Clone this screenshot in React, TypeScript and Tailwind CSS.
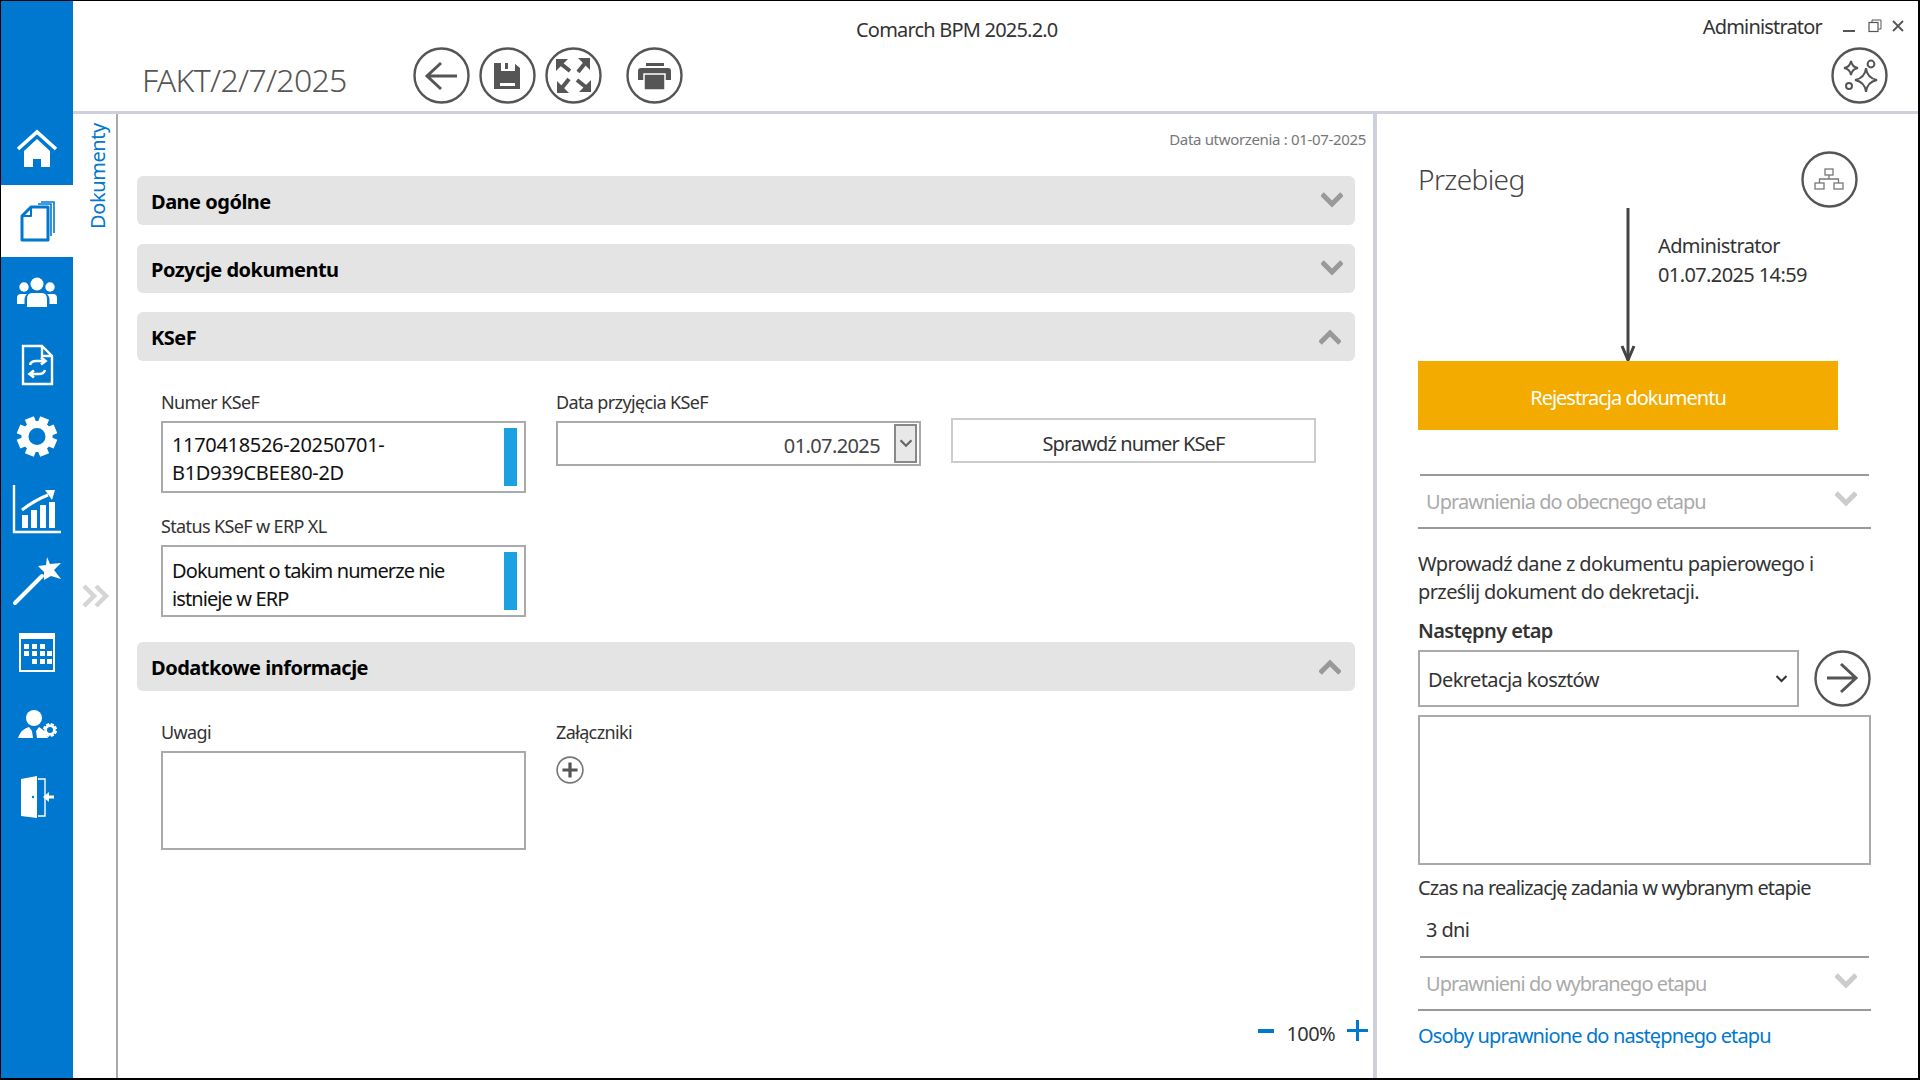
import React from "react";

const Chevron = ({ up = false, color = "#999999", w = 22, h = 16, sw = 5 }: { up?: boolean; color?: string; w?: number; h?: number; sw?: number }) => (
  <svg width={w} height={h} viewBox="0 0 22 16" className="block shrink-0">
    <polyline points={up ? "1,14 11,4 21,14" : "1,2 11,12 21,2"} fill="none" stroke={color} strokeWidth={sw} />
  </svg>
);

const Circle = ({ children, size = 57 }: { children?: React.ReactNode; size?: number }) => (
  <svg width={size} height={size} viewBox="0 0 57 57" className="block shrink-0">
    <circle cx="28.5" cy="28.5" r="27" fill="#fff" stroke="#555555" strokeWidth="2.4" />
    {children}
  </svg>
);

const Bar = ({ title, up = false, cls = "" }: { title: string; up?: boolean; cls?: string }) => (
  <div className={`h-[49px] rounded-[6px] bg-[#e4e4e4] flex items-center justify-between pl-[14px] pr-[13px] mr-[11px] ${cls}`}>
    <span className="text-[20px] font-bold text-black tracking-[-0.025em] pt-[3px]">{title}</span>
    <span className={up ? "mr-[1px] mt-[1px]" : "-mr-[1px] -mt-[2px]"}><Chevron up={up} /></span>
  </div>
);

const Label = ({ children }: { children: React.ReactNode }) => (
  <div className="h-[24px] leading-[22px] text-[18px] tracking-[-0.035em] text-[#333333]">{children}</div>
);

const TextField = ({ l1, l2, num = false }: { l1: string; l2: string; num?: boolean }) => (
  <div className="mt-[6px] w-[365px] h-[72px] border-2 border-[#aaaaaa] flex items-center justify-between pl-[9px] pr-[7px]">
    <div className={num ? "text-[20px] leading-[28px] text-[#111111] pt-[4px] tracking-[-0.016em]" : "text-[20px] leading-[28px] text-[#111111] pt-[8px] tracking-[-0.045em]"}>
      <div>{l1}</div>
      <div>{l2}</div>
    </div>
    <div className="w-[13px] h-[58px] bg-[#1ba1e2]" />
  </div>
);

const HR = ({ inset = false }: { inset?: boolean }) => (
  <div className={`h-[2px] bg-[#999999] ${inset ? "mx-[2px]" : ""}`} />
);

const Fold = ({ title }: { title: string }) => (
  <div className="h-[51px] flex items-center justify-between pl-[8px] pr-[14px]">
    <span className="text-[20px] text-[#aaaaaa] tracking-[-0.047em]">{title}</span>
    <span className="-mt-[5px]"><Chevron color="#cccccc" /></span>
  </div>
);

const W = "#ffffff";

const Gear = ({ cx, cy, r, hole, c }: { cx: number; cy: number; r: number; hole: number; c: string }) => (
  <g>
    {[0, 45, 90, 135, 180, 225, 270, 315].map((a) => (
      <rect key={a} x={cx - r * 0.24} y={cy - r} width={r * 0.48} height={r * 0.5} fill={c} transform={`rotate(${a + 22.5} ${cx} ${cy})`} />
    ))}
    <circle cx={cx} cy={cy} r={(r * 0.78 + hole) / 2} fill="none" stroke={c} strokeWidth={r * 0.78 - hole} />
  </g>
);

const navIcons: React.ReactNode[] = [
  <g key="h">
    <polyline points="17,36 36,19 55,36" fill="none" stroke={W} strokeWidth="3.6" />
    <path d="M23 38 L36 26 L49 38 V54 H40 V46 H32 V54 H23 Z" fill={W} />
  </g>,
  <g key="d" fill="none" stroke="#0078cf" strokeLinejoin="round">
    <path d="M30 22 H47 V55 H21 V31 Z" strokeWidth="3" />
    <path d="M30 22 V31 H21" strokeWidth="2" />
    <path d="M37 19 H50 V51" strokeWidth="1.6" />
    <path d="M40 17 H53 V48" strokeWidth="1.6" />
  </g>,
  <g key="p" fill={W}>
    <circle cx="36" cy="27" r="6.5" />
    <circle cx="23" cy="30" r="4.7" />
    <circle cx="49" cy="30" r="4.7" />
    <path d="M26 50 V42 Q26 36 31 36 H41 Q46 36 46 42 V50 Z" />
    <path d="M16 47 V41 Q16 37 20 37 H26 Q23 39 23.5 47 Z" />
    <path d="M56 47 V41 Q56 37 52 37 H46 Q49 39 48.5 47 Z" />
  </g>,
  <g key="r" fill="none" stroke={W}>
    <path d="M22 17 H41 L51 27 V55 H22 Z M41 17 V27 H51" strokeWidth="2.4" />
    <path d="M29 36 Q30 32 35 32 H44 M40 28.5 L44.5 32 L40 35.5" strokeWidth="2.6" />
    <path d="M44 41 Q43 45 38 45 H29 M33 41.5 L28.5 45 L33 48.5" strokeWidth="2.6" />
  </g>,
  <g key="s"><Gear cx={36} cy={35.5} r={20} hole={8.5} c={W} /></g>,
  <g key="c">
    <polyline points="13,12 13,59 60,59" fill="none" stroke={W} strokeWidth="2.4" />
    <rect x="21" y="42" width="6" height="13" fill={W} />
    <rect x="30" y="37" width="6" height="18" fill={W} />
    <rect x="39" y="32" width="6" height="23" fill={W} />
    <rect x="48" y="29" width="6" height="26" fill={W} />
    <path d="M21 37 Q34 27 47 22" fill="none" stroke={W} strokeWidth="3" />
    <polygon points="54,17 44,17 51,27" fill={W} />
  </g>,
  <g key="w">
    <line x1="14" y1="58" x2="41" y2="31" stroke={W} strokeWidth="4" strokeLinecap="round" />
    <polygon points="46,12 49,19 60,18 53,25 60,34 50,31 43,35 43,27 37,21 45,20" fill={W} />
  </g>,
  <g key="k" transform="translate(-1 0)">
    <rect x="20" y="17" width="34" height="37" fill="none" stroke={W} strokeWidth="2" />
    <rect x="19" y="16" width="36" height="6" fill={W} />
    {[
      [25, 28], [33, 28], [41, 28],
      [25, 35], [33, 35], [41, 35], [48, 35],
      [33, 43], [41, 43], [48, 43],
    ].map(([x, y]) => (
      <rect key={`${x}-${y}`} x={x - 1} y={y - 1} width="5" height="5" fill={W} />
    ))}
  </g>,
  <g key="u">
    <circle cx="33" cy="29" r="8" fill={W} />
    <path d="M17 49 Q20 40 28 38 L31 42 L32 49 Z M47 49 Q46 43 38 38 L35 42 L36 49 Z" fill={W} />
    <Gear cx={49} cy={41} r={7} hole={3} c={W} />
  </g>,
  <g key="e">
    <polygon points="20,18 36,15 36,57 20,55" fill={W} />
    <path d="M37 18 H44 V55 H37" fill="none" stroke={W} strokeWidth="1.4" />
    <circle cx="32" cy="36" r="1.2" fill="#0078cf" />
    <path d="M53 36 H47" stroke={W} strokeWidth="3" />
    <polygon points="42,36 48,31 48,41" fill={W} />
  </g>,
];

export default function App() {
  return (
    <div className="w-[1920px] h-[1080px] bg-white border-black border-t border-l border-r-2 border-b-2 flex overflow-hidden font-['Noto_Sans',sans-serif] tracking-[-0.038em]">
      <aside className="w-[72px] shrink-0 bg-[#0078cf] pt-[112px]">
        {navIcons.map((ic, i) => (
          <div key={i} className={`h-[72px] ${i === 1 ? "bg-white" : ""}`}>
            <svg width="72" height="72" viewBox="0 0 72 72" className="block">{ic}</svg>
          </div>
        ))}
      </aside>

      <div className="flex-1 flex flex-col min-w-0">
        <header className="h-[113px] shrink-0 border-b-[3px] border-[#cfd0de]">
          <div className="h-[46px] pt-[11px] flex items-center text-[#333333]">
            <span className="ml-[783px] text-[20px] tracking-[-0.04em]">Comarch BPM 2025.2.0</span>
            <span className="ml-auto text-[20px] -mt-[6px] tracking-[-0.041em]">Administrator</span>
            <svg width="64" height="14" viewBox="0 0 64 14" className="ml-[20px] mr-[12px] -mt-[7px] block" fill="none" stroke="#555555">
              <line x1="1" y1="12" x2="13" y2="12" strokeWidth="2" />
              <rect x="27" y="3.5" width="9" height="9" strokeWidth="1.2" />
              <path d="M30 3 V1 H39 V10 H36.5" strokeWidth="1" />
              <path d="M51 2 L61 12 M61 2 L51 12" strokeWidth="1.8" />
            </svg>
          </div>
          <div className="h-[57px] flex items-center pl-[69px] pr-[30px]">
            <div className="w-[271px] text-[32px] font-light text-[#555555] tracking-[-0.022em] mt-[8px]">FAKT/2/7/2025</div>
            <div className="flex gap-[9px]">
              <Circle>
                <path d="M14 29 H44 M28 16 L14 29 L28 42" fill="none" stroke="#555555" strokeWidth="3" />
              </Circle>
              <Circle>
                <path d="M15 16 H35 L41 21 V42 H15 Z" fill="#555555" />
                <rect x="22" y="16" width="14" height="8" fill="#fff" />
                <rect x="26" y="16" width="3" height="6" fill="#555555" />
                <rect x="21" y="36" width="15" height="3" fill="#fff" />
              </Circle>
              <Circle>
                {[0, 90, 180, 270].map((a) => (
                  <g key={a} transform={`rotate(${a} 28.5 28.5)`}>
                    <polygon points="11,12 23,12 11,24" fill="#555555" />
                    <line x1="15" y1="16" x2="25" y2="24" stroke="#555555" strokeWidth="4" />
                  </g>
                ))}
              </Circle>
            </div>
            <div className="ml-[24px]">
              <Circle>
                <rect x="20" y="16" width="18" height="3" fill="#555555" />
                <path d="M12 24 Q12 21 15 21 H42 Q45 21 45 24 V33 H12 Z" fill="#555555" />
                <rect x="18" y="27" width="21" height="16" fill="#555555" stroke="#fff" strokeWidth="1.5" />
              </Circle>
            </div>
            <div className="ml-auto">
              <Circle>
                <g fill="none" stroke="#555555" strokeWidth="2">
                  <path d="M35 21 Q36 31 46 33 Q36 35 35 45 Q34 35 24 33 Q34 31 35 21 Z" />
                  <path d="M20 14 Q21 20 27 21 Q21 22 20 28 Q19 22 13 21 Q19 20 20 14 Z" />
                  <circle cx="40" cy="17" r="3.4" />
                  <circle cx="18" cy="39" r="3" />
                </g>
              </Circle>
            </div>
          </div>
        </header>

        <div className="flex-1 flex min-h-0">
          <div className="w-[45px] shrink-0 border-r-2 border-[#aaaaaa] flex flex-col items-center">
            <div className="mt-[9px] ml-[7px] h-[106px] flex items-center justify-center text-[#0078cf] text-[20px] tracking-[-0.02em] [writing-mode:vertical-rl] rotate-180">Dokumenty</div>
            <svg width="30" height="24" viewBox="0 0 30 24" className="block mt-[355px] -mr-[2px]" fill="none" stroke="#d5d5d5" strokeWidth="4.5">
              <polyline points="3,2 13,12 3,22" />
              <polyline points="15,2 25,12 15,22" />
            </svg>
          </div>

          <main className="w-[1255px] shrink-0 flex flex-col pl-[19px] pr-[7px] pt-[15px] pb-[34px]">
            <div className="h-[20px] mb-[1px] leading-[20px] text-right text-[15px] tracking-[-0.022em] text-[#777777]">Data utworzenia : 01-07-2025</div>
            <Bar title="Dane ogólne" cls="mt-[26px]" />
            <Bar title="Pozycje dokumentu" cls="mt-[19px]" />
            <Bar title="KSeF" up cls="mt-[19px]" />
            <div className="mt-[30px] pl-[24px]">
              <div className="flex gap-[30px]">
                <div className="w-[365px]">
                  <Label>Numer KSeF</Label>
                  <TextField l1="1170418526-20250701-" l2="B1D939CBEE80-2D" num />
                </div>
                <div className="w-[365px]">
                  <Label>Data przyjęcia KSeF</Label>
                  <div className="mt-[6px] h-[45px] border-2 border-[#aaaaaa] flex items-center justify-end pr-[2px]">
                    <span className="text-[20px] text-[#444444] mr-[14px] pt-[4px]">01.07.2025</span>
                    <div className="w-[23px] h-[39px] border-2 border-[#888888] bg-[#e8e8e8] flex items-center justify-center">
                      <Chevron color="#666666" w={12} h={9} sw={4} />
                    </div>
                  </div>
                </div>
                <div className="w-[365px] pt-[27px]">
                  <div className="h-[45px] pt-[6px] border-2 border-[#cccccc] flex items-center justify-center text-[20px] tracking-[-0.045em] text-[#333333]">Sprawdź numer KSeF</div>
                </div>
              </div>
              <div className="mt-[22px]">
                <Label>Status KSeF w ERP XL</Label>
                <TextField l1="Dokument o takim numerze nie" l2="istnieje w ERP" />
              </div>
            </div>
            <Bar title="Dodatkowe informacje" up cls="mt-[25px]" />
            <div className="mt-[30px] pl-[24px] flex gap-[30px]">
              <div className="w-[365px]">
                <Label>Uwagi</Label>
                <div className="mt-[6px] h-[99px] border-2 border-[#aaaaaa]" />
              </div>
              <div>
                <Label>Załączniki</Label>
                <svg width="28" height="28" viewBox="0 0 26 26" className="block mt-[11px]">
                  <circle cx="13" cy="13" r="12" fill="#fff" stroke="#777777" strokeWidth="1.5" />
                  <path d="M13 6 V20 M6 13 H20" stroke="#555555" strokeWidth="3" />
                </svg>
              </div>
            </div>
            <div className="mt-auto flex items-center justify-end h-[28px] text-[20px] text-[#333333]">
              <span className="w-[16px] h-[4px] bg-[#0078cf] mt-[1px]" />
              <span className="ml-[12px] mr-[12px] pt-[7px]">100%</span>
              <svg width="21" height="21" viewBox="0 0 21 21" className="block mr-[-2px] mt-[1px]">
                <path d="M10.5 0 V21 M0 10.5 H21" stroke="#0078cf" strokeWidth="3" />
              </svg>
            </div>
          </main>

          <div className="w-[4px] shrink-0 bg-[#cfd0de]" />

          <section className="flex-1 pl-[41px] pr-[47px] min-w-0">
            <div className="pt-[37px] h-[94px] flex items-center justify-between pr-[13px]">
              <span className="text-[28px] font-light text-[#444444] -mt-[2px]">Przebieg</span>
              <Circle>
                <g fill="none" stroke="#777777" strokeWidth="1.3">
                  <rect x="24" y="18" width="8" height="6" />
                  <rect x="14" y="32" width="9" height="6" />
                  <rect x="33" y="32" width="9" height="6" />
                  <path d="M28 24 V28 M18.5 32 V28 H37.5 V32" />
                </g>
              </Circle>
            </div>
            <div className="h-[153px] flex">
              <svg width="16" height="153" viewBox="0 0 16 153" className="block ml-[202px] shrink-0">
                <path d="M8 0 V152" stroke="#444444" strokeWidth="3" />
                <path d="M2 138 L8 152 L14 138" fill="none" stroke="#444444" strokeWidth="3" />
              </svg>
              <div className="ml-[22px] pt-[23px] text-[20px] leading-[29px] text-[#333333]">
                <div>Administrator</div>
                <div>01.07.2025 14:59</div>
              </div>
            </div>
            <div className="w-[420px] h-[69px] pt-[4px] bg-[#f4ab00] flex items-center justify-center text-white text-[20px] tracking-[-0.05em]">Rejestracja dokumentu</div>

            <div className="mt-[44px]">
              <HR inset />
              <Fold title="Uprawnienia do obecnego etapu" />
              <HR />
            </div>

            <div className="mt-[21px] text-[20px] leading-[28px] text-[#333333]">
              <div>Wprowadź dane z dokumentu papierowego i</div>
              <div>prześlij dokument do dekretacji.</div>
            </div>
            <div className="mt-[11px] h-[28px] leading-[28px] text-[20px] font-semibold text-[#333333]">Następny etap</div>
            <div className="mt-[5px] flex justify-between">
              <div className="w-[381px] h-[57px] border-2 border-[#aaaaaa] flex items-center justify-between pl-[8px] pr-[10px] text-[20px] text-[#333333]">
                <span className="pt-[2px]">Dekretacja kosztów</span>
                <Chevron color="#333333" w={11} h={8} sw={4} />
              </div>
              <Circle>
                <path d="M13 28 H42 M27 14 L42 28 L27 42" fill="none" stroke="#555555" strokeWidth="3" />
              </Circle>
            </div>
            <div className="mt-[8px] h-[150px] border-2 border-[#aaaaaa]" />
            <div className="mt-[9px] h-[28px] leading-[28px] text-[20px] tracking-[-0.043em] text-[#333333]">Czas na realizację zadania w wybranym etapie</div>
            <div className="mt-[14px] h-[28px] leading-[28px] pl-[8px] text-[20px] text-[#333333]">3 dni</div>
            <div className="mt-[12px]">
              <HR inset />
              <Fold title="Uprawnieni do wybranego etapu" />
              <HR />
            </div>
            <div className="mt-[11px] h-[28px] leading-[28px] text-[20px] tracking-[-0.043em] text-[#0078cf]">Osoby uprawnione do następnego etapu</div>
          </section>
        </div>
      </div>
    </div>
  );
}
